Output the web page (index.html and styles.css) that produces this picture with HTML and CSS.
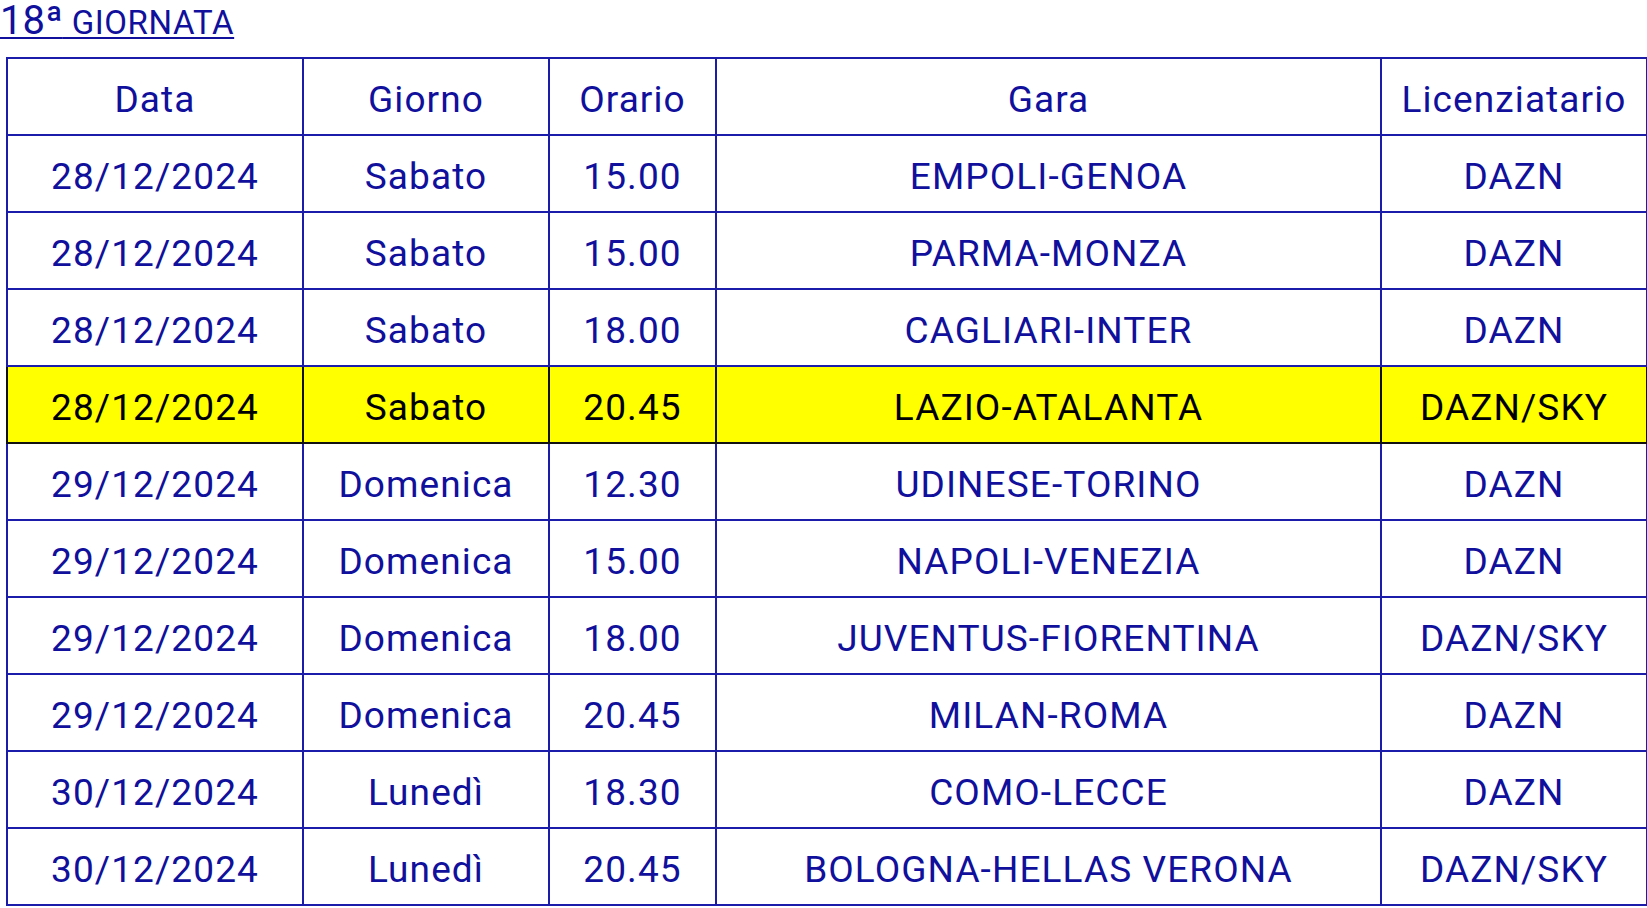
FILE: index.html
```html
<!DOCTYPE html>
<html lang="it">
<head>
<meta charset="utf-8">
<title>18ª Giornata</title>
<link rel="stylesheet" href="styles.css">
</head>
<body>
<div class="head"><a class="title" href="#"><span class="num">18ª</span> GIORNATA</a></div>
<table class="fixtures">
  <colgroup>
    <col class="c-data"><col class="c-giorno"><col class="c-orario"><col class="c-gara"><col class="c-lic">
  </colgroup>
  <tr><td>Data</td><td>Giorno</td><td>Orario</td><td>Gara</td><td>Licenziatario</td></tr>
  <tr><td>28/12/2024</td><td>Sabato</td><td>15.00</td><td>EMPOLI-GENOA</td><td>DAZN</td></tr>
  <tr><td>28/12/2024</td><td>Sabato</td><td>15.00</td><td>PARMA-MONZA</td><td>DAZN</td></tr>
  <tr><td>28/12/2024</td><td>Sabato</td><td>18.00</td><td>CAGLIARI-INTER</td><td>DAZN</td></tr>
  <tr class="hl"><td>28/12/2024</td><td>Sabato</td><td>20.45</td><td>LAZIO-ATALANTA</td><td>DAZN/SKY</td></tr>
  <tr><td>29/12/2024</td><td>Domenica</td><td>12.30</td><td>UDINESE-TORINO</td><td>DAZN</td></tr>
  <tr><td>29/12/2024</td><td>Domenica</td><td>15.00</td><td>NAPOLI-VENEZIA</td><td>DAZN</td></tr>
  <tr><td>29/12/2024</td><td>Domenica</td><td>18.00</td><td>JUVENTUS-FIORENTINA</td><td>DAZN/SKY</td></tr>
  <tr><td>29/12/2024</td><td>Domenica</td><td>20.45</td><td>MILAN-ROMA</td><td>DAZN</td></tr>
  <tr><td>30/12/2024</td><td>Lunedì</td><td>18.30</td><td>COMO-LECCE</td><td>DAZN</td></tr>
  <tr><td>30/12/2024</td><td>Lunedì</td><td>20.45</td><td>BOLOGNA-HELLAS VERONA</td><td>DAZN/SKY</td></tr>
</table>
</body>
</html>
```

FILE: styles.css
```css
html, body {
  margin: 0;
  padding: 0;
  background: #ffffff;
}
body {
  font-family: Roboto, "Liberation Sans", sans-serif;
  color: #10109c;
}
.head {
  height: 42px;
  padding-top: 2px;
  box-sizing: border-box;
}
.title {
  display: inline-block;
  line-height: 38px;
  font-size: 33px;
  color: #10109c;
  text-decoration: underline;
  text-decoration-thickness: 2px;
  text-underline-offset: 3px;
  letter-spacing: 0.6px;
}
.title .num {
  font-size: 40px;
  letter-spacing: 0;
}
.fixtures {
  margin: 15px 0 0 6px;
  border-collapse: collapse;
  table-layout: fixed;
  width: 1640px;
}
.c-data { width: 296px; }
.c-giorno { width: 246px; }
.c-orario { width: 167px; }
.c-gara { width: 665px; }
.c-lic { width: 266px; }
.fixtures td {
  border: 2px solid #1c1cab;
  height: 77px;
  padding: 6px 0 0 0;
  box-sizing: border-box;
  text-align: center;
  vertical-align: middle;
  font-size: 37px;
  letter-spacing: 1.1px;
  color: #10109c;
  white-space: nowrap;
}
.fixtures tr.hl td {
  background: #ffff00;
  color: #000000;
  border-color: #111111;
}
```
